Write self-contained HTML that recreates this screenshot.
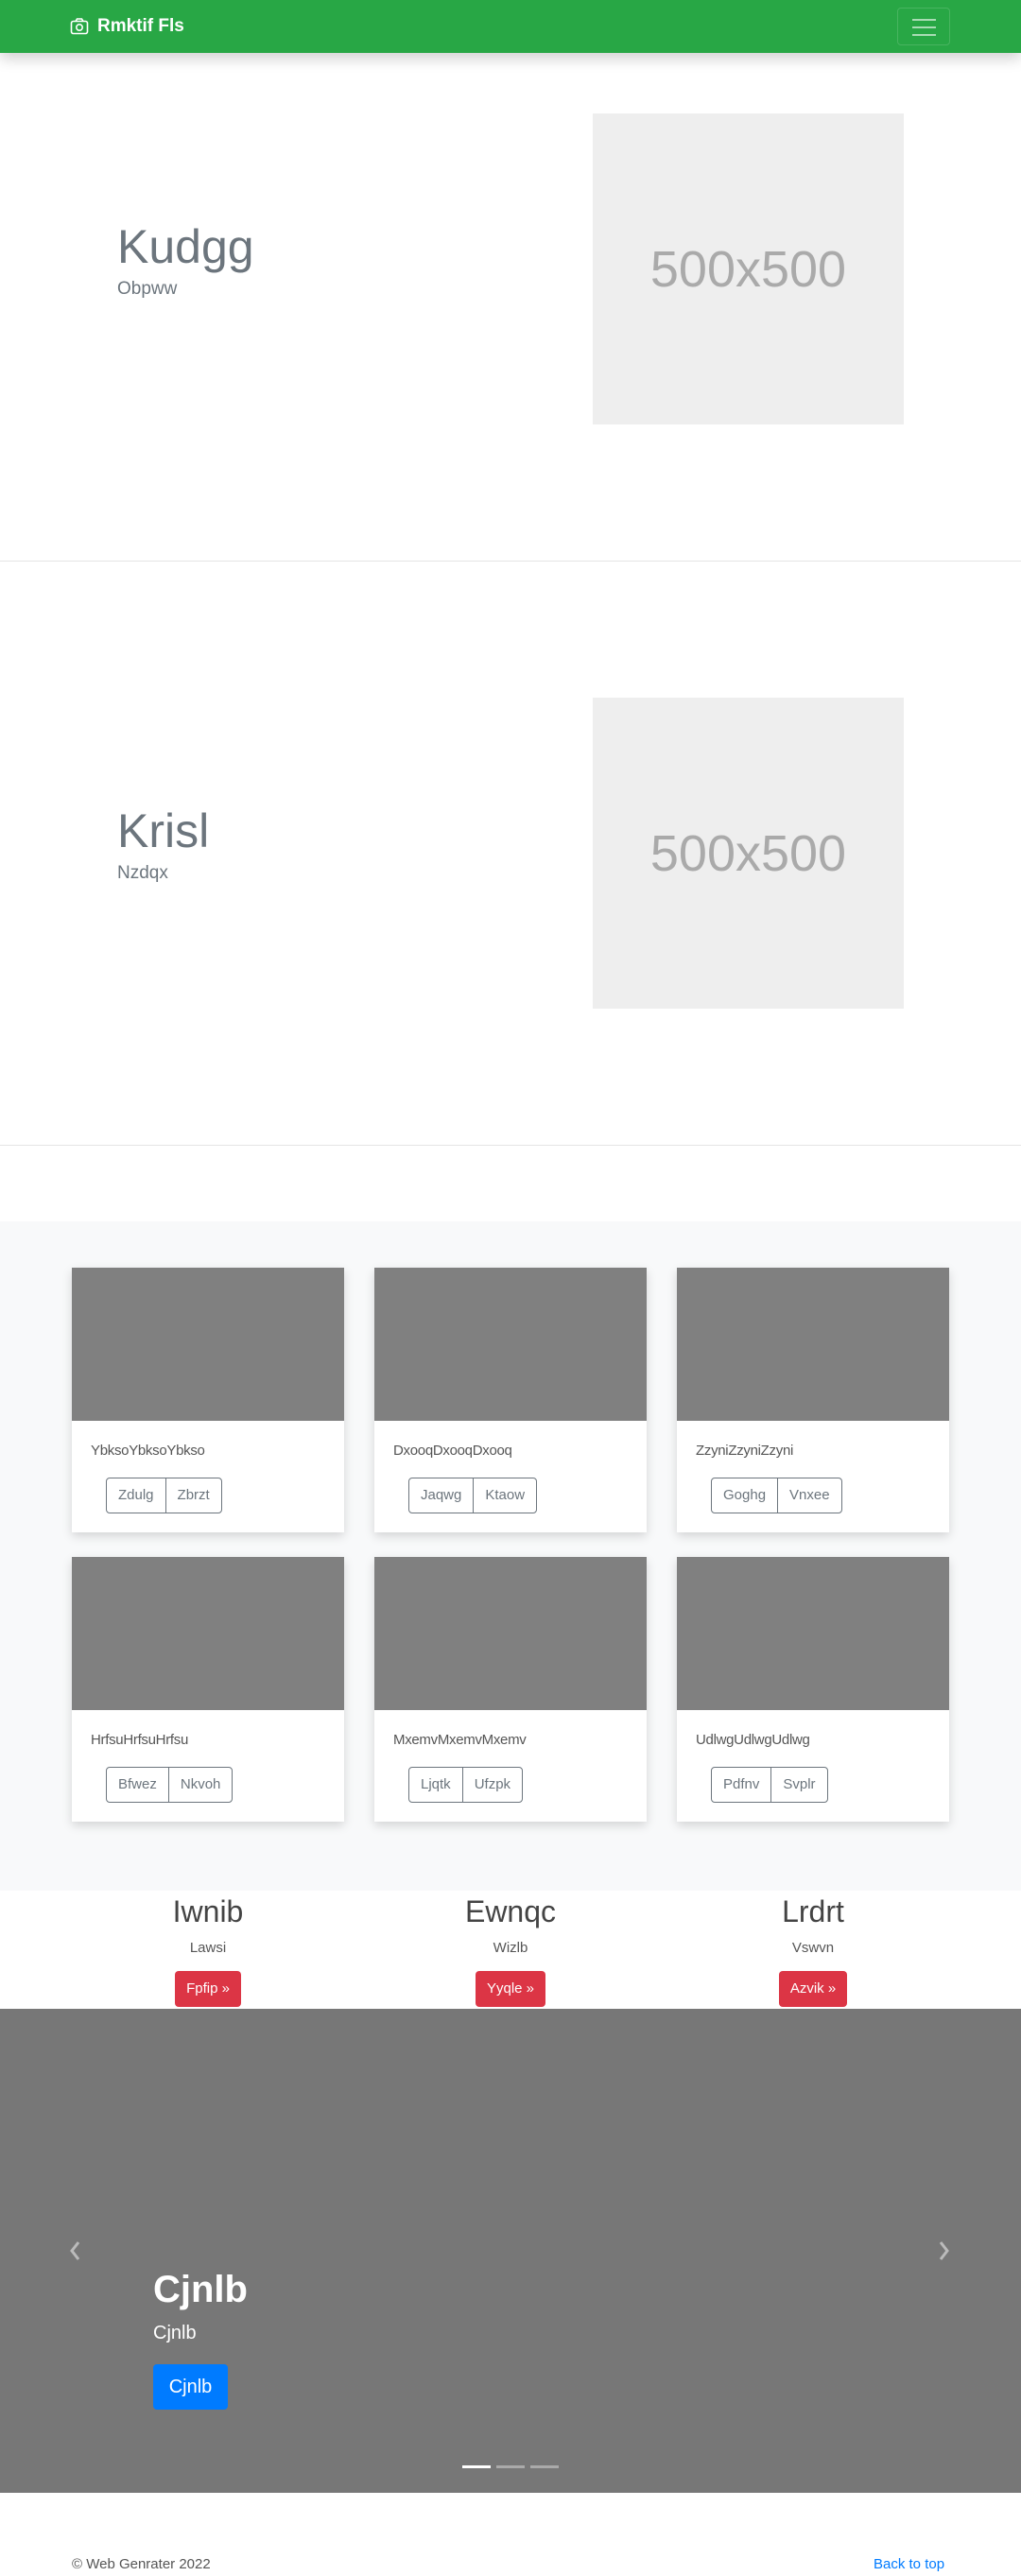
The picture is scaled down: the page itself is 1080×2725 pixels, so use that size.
<!DOCTYPE html>
<html><head><meta charset="utf-8"><style>
*{box-sizing:border-box;margin:0;padding:0}
body{width:1080px;height:2725px;position:relative;font-family:"Liberation Sans",sans-serif;background:#fff;overflow:hidden}
.a{position:absolute}
.nav{left:0;top:0;width:1080px;height:56px;background:#28a745;box-shadow:0 6px 14px rgba(0,0,0,.18);z-index:2}
.ph{background:#eee;color:#aaa;font-size:54px;display:flex;align-items:center;justify-content:center}
.h{color:#6c757d;font-size:50px;font-weight:300;line-height:1}
.s{color:#6c757d;font-size:19px;font-weight:300}
.card{background:#fff;width:288px;height:280px;box-shadow:0 4px 10px rgba(0,0,0,.15)}
.card .img{height:162px;background:#808080}
.card .t{position:absolute;left:20px;top:185px;font-size:15px;color:#555;letter-spacing:-.3px}
.bg{position:absolute;left:36px;top:222px;height:38px;display:flex;border:1px solid #6c757d;border-radius:4px}
.bg span{padding:0 12px;line-height:36px;font-size:15px;color:#6c757d}
.bg span+span{border-left:1px solid #6c757d}
.col{width:320px;text-align:center}
.col h2{font-size:32px;font-weight:500;color:#444;line-height:40px}
.col p{font-size:15px;color:#555;margin-top:10px}
.col b{display:inline-block;margin-top:16px;background:#dc3545;color:#fff;font-weight:400;font-size:15px;line-height:38px;padding:0 12px;border-radius:4px}
</style></head><body>
<div class="a nav">
<svg class="a" style="left:74px;top:18px" width="20" height="20" viewBox="0 0 20 20" fill="none" stroke="#fff" stroke-width="1.6"><rect x="1.5" y="4.5" width="17" height="13" rx="2"/><path d="M6 4.5L7.5 2h5L14 4.5"/><circle cx="10" cy="11" r="3.2"/></svg>
<div class="a" style="left:103px;top:17px;color:#fff;font-weight:bold;font-size:19px">Rmktif Fls</div>
<div class="a" style="left:949px;top:8px;width:56px;height:40px;border:1px solid rgba(255,255,255,.15);border-radius:4px">
<div class="a" style="left:15px;top:11px;width:25px;height:2px;background:rgba(255,255,255,.6)"></div>
<div class="a" style="left:15px;top:19px;width:25px;height:2px;background:rgba(255,255,255,.6)"></div>
<div class="a" style="left:15px;top:27px;width:25px;height:2px;background:rgba(255,255,255,.6)"></div></div>
</div>

<div class="a h" style="left:124px;top:236px">Kudgg</div>
<div class="a s" style="left:124px;top:295px">Obpww</div>
<div class="a ph" style="left:627px;top:120px;width:329px;height:329px">500x500</div>
<div class="a" style="left:0;top:593px;width:1080px;height:1px;background:#e5e5e5"></div>

<div class="a h" style="left:124px;top:854px">Krisl</div>
<div class="a s" style="left:124px;top:913px">Nzdqx</div>
<div class="a ph" style="left:627px;top:738px;width:329px;height:329px">500x500</div>
<div class="a" style="left:0;top:1211px;width:1080px;height:1px;background:#e5e5e5"></div>

<div class="a" style="left:0;top:1292px;width:1080px;height:708px;background:#f8f9fa"></div>
<div class="a card" style="left:76px;top:1341px"><div class="img"></div><div class="t">YbksoYbksoYbkso</div><div class="bg"><span>Zdulg</span><span>Zbrzt</span></div></div>
<div class="a card" style="left:396px;top:1341px"><div class="img"></div><div class="t">DxooqDxooqDxooq</div><div class="bg"><span>Jaqwg</span><span>Ktaow</span></div></div>
<div class="a card" style="left:716px;top:1341px"><div class="img"></div><div class="t">ZzyniZzyniZzyni</div><div class="bg"><span>Goghg</span><span>Vnxee</span></div></div>
<div class="a card" style="left:76px;top:1647px"><div class="img"></div><div class="t">HrfsuHrfsuHrfsu</div><div class="bg"><span>Bfwez</span><span>Nkvoh</span></div></div>
<div class="a card" style="left:396px;top:1647px"><div class="img"></div><div class="t">MxemvMxemvMxemv</div><div class="bg"><span>Ljqtk</span><span>Ufzpk</span></div></div>
<div class="a card" style="left:716px;top:1647px"><div class="img"></div><div class="t">UdlwgUdlwgUdlwg</div><div class="bg"><span>Pdfnv</span><span>Svplr</span></div></div>

<div class="a col" style="left:60px;top:2002px"><h2>Iwnib</h2><p>Lawsi</p><b>Fpfip »</b></div>
<div class="a col" style="left:380px;top:2002px"><h2>Ewnqc</h2><p>Wizlb</p><b>Yyqle »</b></div>
<div class="a col" style="left:700px;top:2002px"><h2>Lrdrt</h2><p>Vswvn</p><b>Azvik »</b></div>

<div class="a" style="left:0;top:2125px;width:1080px;height:512px;background:#777"></div>
<svg class="a" style="left:72px;top:2370px" width="14" height="22" viewBox="0 0 14 22"><path d="M11 2L4 11l7 9" stroke="#bbb" stroke-width="3" fill="none"/></svg>
<svg class="a" style="left:992px;top:2370px" width="14" height="22" viewBox="0 0 14 22"><path d="M3 2l7 9-7 9" stroke="#bbb" stroke-width="3" fill="none"/></svg>
<div class="a" style="left:162px;top:2400px;color:#fff;font-size:40px;font-weight:bold">Cjnlb</div>
<div class="a" style="left:162px;top:2457px;color:#fff;font-size:20px">Cjnlb</div>
<div class="a" style="left:162px;top:2501px;width:79px;height:48px;background:#007bff;border-radius:4px;color:#fff;font-size:20px;line-height:48px;text-align:center">Cjnlb</div>
<div class="a" style="left:489px;top:2608px;width:30px;height:3px;background:#fff"></div>
<div class="a" style="left:525px;top:2608px;width:30px;height:3px;background:#aaa"></div>
<div class="a" style="left:561px;top:2608px;width:30px;height:3px;background:#aaa"></div>

<div class="a" style="left:76px;top:2704px;font-size:15px;color:#555">© Web Genrater 2022</div>
<div class="a" style="left:924px;top:2704px;font-size:15px;color:#007bff">Back to top</div>
</body></html>
